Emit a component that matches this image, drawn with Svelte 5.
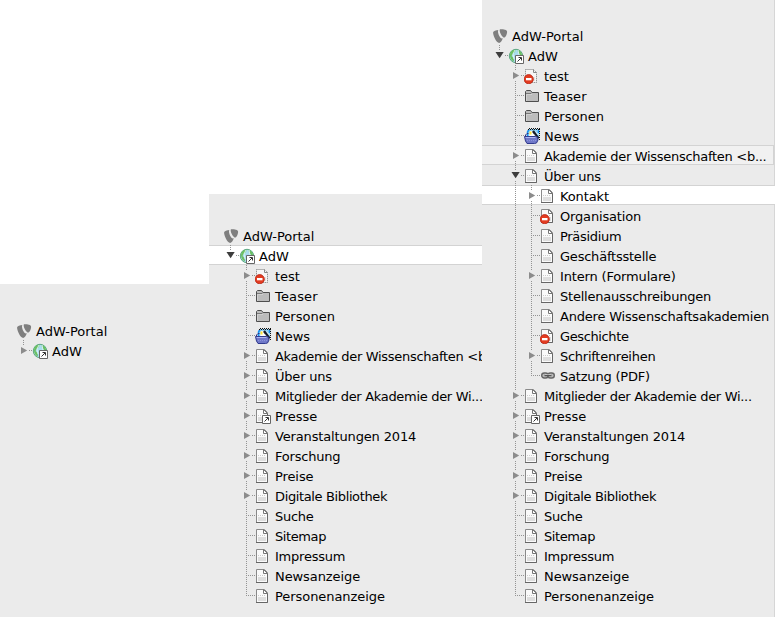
<script>
  const before = [
    ['test', 'hidden', 'closed'],
    ['Teaser', 'folder'],
    ['Personen', 'folder'],
    ['News', 'news']
  ];
  const after = [
    ['Mitglieder der Akademie der Wi...', 'page', 'closed'],
    ['Presse', 'shortcut', 'closed'],
    ['Veranstaltungen 2014', 'page', 'closed'],
    ['Forschung', 'page', 'closed'],
    ['Preise', 'page', 'closed'],
    ['Digitale Bibliothek', 'page', 'closed'],
    ['Suche', 'page'],
    ['Sitemap', 'page'],
    ['Impressum', 'page'],
    ['Newsanzeige', 'page'],
    ['Personenanzeige', 'page']
  ];
  const sub = [
    ['Kontakt', 'page', 'closed', 'selected'],
    ['Organisation', 'stop'],
    ['Präsidium', 'page'],
    ['Geschäftsstelle', 'page'],
    ['Intern (Formulare)', 'page', 'closed'],
    ['Stellenausschreibungen', 'page'],
    ['Andere Wissenschaftsakademien', 'page'],
    ['Geschichte', 'stop'],
    ['Schriftenreihen', 'page', 'closed'],
    ['Satzung (PDF)', 'link']
  ];

  // Letter spacing in px for each label.
  const tracking = {
    'Teaser': 0.15,
    'Akademie der Wissenschaften <b...': -0.29,
    'Über uns': -0.2,
    'Mitglieder der Akademie der Wi...': -0.31,
    'Veranstaltungen 2014': -0.15,
    'Forschung': -0.2,
    'Preise': -0.1,
    'Digitale Bibliothek': -0.37,
    'Suche': -0.3,
    'Sitemap': -0.4,
    'Impressum': -0.22,
    'Newsanzeige': -0.08,
    'Personenanzeige': -0.06,
    'Kontakt': -0.12,
    'Organisation': -0.17,
    'Präsidium': -0.3,
    'Geschäftsstelle': -0.22,
    'Intern (Formulare)': -0.16,
    'Stellenausschreibungen': -0.22,
    'Andere Wissenschaftsakademien': -0.2,
    'Geschichte': -0.38,
    'Schriftenreihen': -0.27,
    'Satzung (PDF)': -0.2
  };

  const level = (items, depth, closes) =>
    items.map(([label, icon, toggle, state], i) => ({
      label, icon, toggle, state, depth, last: closes && i === items.length - 1
    }));
  const portal = { label: 'AdW-Portal', icon: 'typo3', depth: 0 };
  const root = (toggle, state) => ({ label: 'AdW', icon: 'globe', depth: 1, toggle, state, last: true });
  const akademie = 'Akademie der Wissenschaften <b...';

  const panels = [
    { name: 'first', rows: [portal, root('closed')] },
    {
      name: 'second',
      rows: [
        portal,
        root('open', 'selected'),
        ...level([...before, [akademie, 'page', 'closed'], ['Über uns', 'page', 'closed'], ...after], 2, true)
      ]
    },
    {
      name: 'third',
      rows: [
        portal,
        root('open'),
        ...level([...before, [akademie, 'page', 'closed', 'hover'], ['Über uns', 'page', 'open']], 2, false),
        ...level(sub, 3, true),
        ...level(after, 2, true)
      ]
    }
  ];
</script>

{#snippet sheet()}
  <path d="M1.500 1.500h8l3 3v10h-11z" fill="#fafafa" stroke="#8a8a8a" />
  <path d="M12.500 5v9.500H1" fill="none" stroke="#666" />
  <path d="M8.500 1.500v4h4z" fill="#fff" stroke="#777" />
  <path d="M3 9h8v4H3z" fill="#dedede" />
  <path d="M3 7.500h8" stroke="#ccc" stroke-dasharray="1 1" />
{/snippet}

{#snippet stopSign()}
  <circle cx="4.700" cy="11.200" r="4.600" fill="#e33b20" stroke="#b52210" stroke-width=".8" />
  <path d="M2 10h5.500v2.300H2z" fill="#fff" />
{/snippet}

{#snippet arrowBox()}
  <path d="M7.500 7.500h8v8h-8z" fill="#fff" stroke="#666" />
  <path d="M9.500 13.500l3.500-3.500M10.500 9.500h3v3" fill="none" stroke="#333" />
{/snippet}

{#snippet icon(kind)}
  <svg class="icon" width="16" height="16" viewBox="0 0 16 16" aria-hidden="true">
    {#if kind === 'typo3'}
      <path d="M10.800 10.300c-.3.100-.5.100-.8.100-2.100 0-4-4.900-4-7 0-.9.200-1.200.5-1.500C4 2.200 1.300 3 1.100 4.200c-.2 3.300 3.300 10.700 6 10.700 1.300 0 2.700-1.700 3.700-4.600M8.300 1.200c3.500 0 6.800.4 6.800 2.500 0 2.800-1.700 5.800-2.900 5.800-1.700 0-4.500-4.600-4.500-7.100 0-1 .2-1.200.6-1.200" fill="#7f7f7f" />
    {:else if kind === 'globe'}
      <circle cx="8" cy="8" r="6.700" fill="#a9dcee" stroke="#4f9f70" stroke-width=".9" />
      <path d="M2.500 4.500C4 2 6 1.700 7.500 2l-.5 2-2 1.500L3.500 8l2 2 .5 3.500C3 12.500 1 8.500 2.500 4.500M9.500 2c3 .5 4.500 3 4.700 5.500L12 7l-2-2.500z" fill="#6cc062" />
      <path d="M7 2l-2 4 1 5M10 2l1 5" fill="none" stroke="#e0f5f6" stroke-width=".9" />
      {@render arrowBox()}
    {:else if kind === 'folder'}
      <path d="M1.500 13.500v-10l1-1h4l1.500 2h6.500v9z" fill="#bcbcbc" stroke="#4e4e4e" />
      <path d="M2 5.500h5l1-1" fill="none" stroke="#777" />
      <path d="M2.500 6.500h5.500M2.500 6.500V13" fill="none" stroke="#d0d0d0" />
    {:else if kind === 'news'}
      <path d="M5 1h10v9H3V3z" fill="#8fd3f7" />
      <path d="M5 1.500L3.500 4v5M14.500 2v3" fill="none" stroke="#168ff0" stroke-width="1.500" />
      <path d="M5 .5h11M4 1.500h12M15.500 1v12" stroke="#111" stroke-dasharray="1 1" />
      <path d="M6 3h3l2 6H5z" fill="#fff" />
      <path d="M5.500 3.500h2v3h-2z" fill="#ffe336" />
      <path d="M9 3l5.500 7.500" stroke="#161b25" stroke-width="2.400" />
      <path d="M9.500 6l2.500 3M11.500 3.500l3 3.500" stroke="#eee" stroke-width=".8" />
      <path d="M1.500 9.500V7L3 5.500h1.500" fill="none" stroke="#30317e" />
      <path d="M.5 8.500h11l2 .5.500 3-1.500 3-2 .5H3L1.500 13z" fill="#7078c8" stroke="#303a8d" />
      <path d="M1.500 9.500h10" stroke="#aeb6f1" />
      <path d="M3 12.500h9" stroke="#8b93dd" stroke-dasharray="1 1" />
    {:else if kind === 'link'}
      <rect x="1.700" y="5" width="6.500" height="5" rx="2.500" fill="#bbb" stroke="#666" stroke-width="1.400" />
      <rect x="7.800" y="5" width="6.500" height="5" rx="2.500" fill="#bbb" stroke="#666" stroke-width="1.400" />
      <path d="M4.500 7.500h7" stroke="#555" stroke-width="1.500" />
      <path d="M5 6.500h6" stroke="#ddd" stroke-width=".6" />
    {:else if kind === 'hidden'}
      <path d="M1.500 1.500h8l3 3v10h-11z" fill="#f6f6f6" stroke="#777" stroke-dasharray="1 1" />
      <path d="M9.500 1.500v3h3" fill="none" stroke="#888" />
      <path d="M3 9h8v4H3z" fill="#e2e2e2" />
      {@render stopSign()}
    {:else}
      {@render sheet()}
      {#if kind === 'stop'}{@render stopSign()}{/if}
      {#if kind === 'shortcut'}{@render arrowBox()}{/if}
    {/if}
  </svg>
{/snippet}

{#snippet branch(row)}
  <svg class="guide" width="16" height="20" viewBox="0 0 16 20" aria-hidden="true">
    <g fill="none" stroke="#939393" stroke-dasharray="1 1">
      {#if row.toggle}
        <path d="M7.500 0V6M13 10.500h3" />
        {#if !row.last}<path d="M7.500 16v4" />{/if}
      {:else}
        <path d={row.last ? 'M7.500 0v11' : 'M7.500 0v20'} />
        <path d="M7 10.500h9" />
      {/if}
    </g>
    {#if row.toggle === 'closed'}<path d="M5 7l6.200 3.500L5 14z" fill="#8c8c8c" />{/if}
    {#if row.toggle === 'open'}<path d="M3.500 7h8.200l-4.100 6.300z" fill="#3d3d3d" />{/if}
  </svg>
{/snippet}

<main>
  {#each panels as panel}
    <section class={panel.name}>
      {#each panel.rows as row}
        <div class={['row', row.state]}>
          {#if row.depth > 1}<span class="guide"></span>{/if}
          {#if row.depth > 2}<span class="guide line"></span>{/if}
          {#if row.depth}{@render branch(row)}{/if}
          {@render icon(row.icon)}
          <span class="label" style:letter-spacing="{tracking[row.label] ?? 0}px">{row.label}</span>
        </div>
      {/each}
    </section>
  {/each}
</main>

<style>
  :global(body) {
    margin: 0;
    background: #fff;
  }
  main {
    display: flex;
    align-items: flex-end;
    width: 775px;
    height: 617px;
    overflow: hidden;
  }
  section {
    box-sizing: border-box;
    flex: none;
    overflow: hidden;
    background: #ebebeb;
    font: 13px/20px 'DejaVu Sans', Verdana, sans-serif;
    color: #000;
  }
  .first {
    width: 209px;
    height: 333px;
    padding-top: 36px;
    --indent: 16px;
  }
  .second {
    width: 273px;
    height: 423px;
    padding-top: 31px;
    --indent: 14px;
  }
  .third {
    width: 293px;
    height: 617px;
    padding-top: 25px;
    --indent: 10px;
    box-shadow: inset -1px 0 #d6d6d6;
  }
  .row {
    display: flex;
    height: 20px;
    padding-left: var(--indent);
    white-space: nowrap;
  }
  .selected {
    background: #fff;
    box-shadow: inset 0 1px #d3d3d3, inset 0 -1px #d3d3d3;
  }
  .hover {
    margin-right: 1px;
    background: #f1f1f1;
    box-shadow: inset 0 1px #d3d3d3, inset 0 -1px #d3d3d3, inset -1px 0 #d3d3d3;
  }
  .guide {
    flex: none;
    width: 16px;
    height: 20px;
  }
  .line {
    background: repeating-linear-gradient(#939393 0 1px, transparent 1px 2px) 7px 0 / 1px 20px no-repeat;
  }
  .icon {
    flex: none;
    margin-top: 3px;
  }
  .label {
    padding: 2px 0 0 4px;
  }
</style>
